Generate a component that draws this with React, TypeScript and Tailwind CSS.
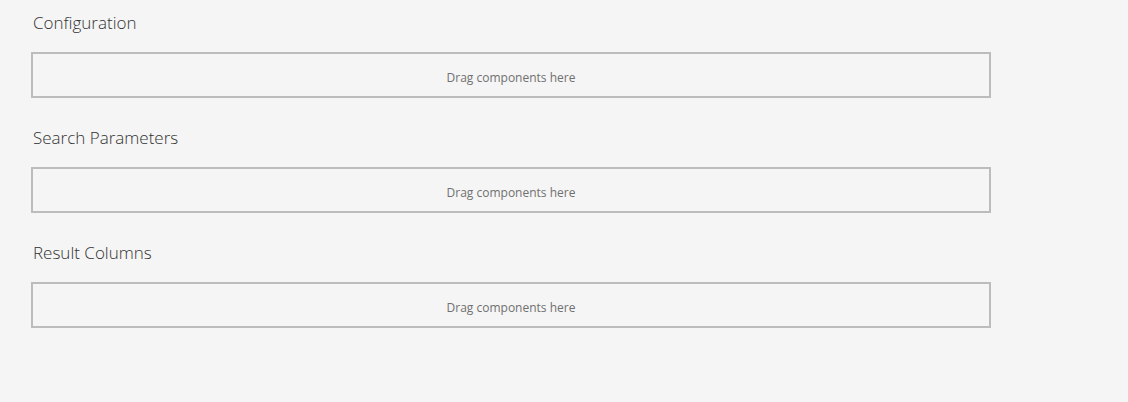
const sections = ['Configuration', 'Search Parameters', 'Result Columns']

export default function App() {
  return (
    <div className="min-h-[402px] w-full bg-[#f5f5f5] pt-[10px] pl-[31px]" style={{ fontFamily: '"Open Sans", "Liberation Sans", sans-serif' }}>
      {sections.map((title) => (
        <section key={title} className="mb-[27px] w-[960px]">
          <h2 className="mb-[17px] pt-[1px] pl-[2px] text-[17px] font-light leading-[24px] text-[#323232]">{title}</h2>
          <div className="flex h-[46px] items-center justify-center border-2 border-[#bcbcbc] bg-[#f5f5f5] pt-[5px]">
            <span className="text-[12px] text-[#707070]">Drag components here</span>
          </div>
        </section>
      ))}
    </div>
  )
}
